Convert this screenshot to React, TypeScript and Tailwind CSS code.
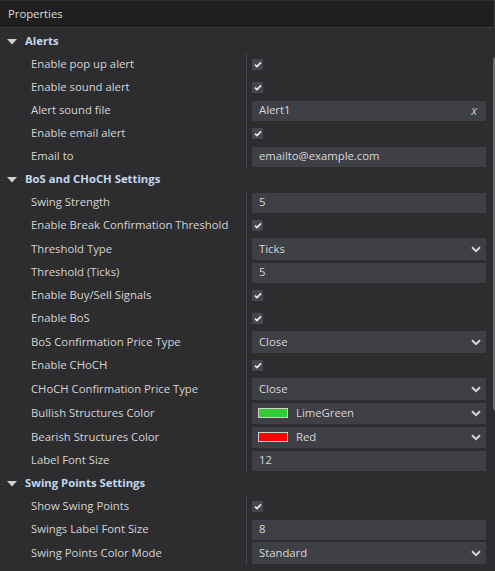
import React from "react";

type Row =
  | { label: string; kind: "check" }
  | { label: string; kind: "text"; value: string; clear?: boolean }
  | { label: string; kind: "select"; value: string }
  | { label: string; kind: "color"; value: string; color: string };

const sections: { title: string; rows: Row[] }[] = [
  {
    title: "Alerts",
    rows: [
      { label: "Enable pop up alert", kind: "check" },
      { label: "Enable sound alert", kind: "check" },
      { label: "Alert sound file", kind: "text", value: "Alert1", clear: true },
      { label: "Enable email alert", kind: "check" },
      { label: "Email to", kind: "text", value: "emailto@example.com" },
    ],
  },
  {
    title: "BoS and CHoCH Settings",
    rows: [
      { label: "Swing Strength", kind: "text", value: "5" },
      { label: "Enable Break Confirmation Threshold", kind: "check" },
      { label: "Threshold Type", kind: "select", value: "Ticks" },
      { label: "Threshold (Ticks)", kind: "text", value: "5" },
      { label: "Enable Buy/Sell Signals", kind: "check" },
      { label: "Enable BoS", kind: "check" },
      { label: "BoS Confirmation Price Type", kind: "select", value: "Close" },
      { label: "Enable CHoCH", kind: "check" },
      { label: "CHoCH Confirmation Price Type", kind: "select", value: "Close" },
      { label: "Bullish Structures Color", kind: "color", value: "LimeGreen", color: "#32cd32" },
      { label: "Bearish Structures Color", kind: "color", value: "Red", color: "#ff0000" },
      { label: "Label Font Size", kind: "text", value: "12" },
    ],
  },
  {
    title: "Swing Points Settings",
    rows: [
      { label: "Show Swing Points", kind: "check" },
      { label: "Swings Label Font Size", kind: "text", value: "8" },
      { label: "Swing Points Color Mode", kind: "select", value: "Standard" },
    ],
  },
];

function Chevron() {
  return (
    <svg width="10" height="7" viewBox="0 0 10 7" className="shrink-0">
      <polyline points="1,1.2 5,5.2 9,1.2" fill="none" stroke="#d6d6d6" strokeWidth="2" />
    </svg>
  );
}

function Value({ row }: { row: Row }) {
  if (row.kind === "check") {
    return (
      <div className="w-[11px] h-[11px] bg-[#46464c] flex items-center justify-center">
        <svg width="8" height="7" viewBox="0 0 8 7">
          <polyline points="1,3.6 3,5.6 7,1.4" fill="none" stroke="#f0f0f0" strokeWidth="1.6" />
        </svg>
      </div>
    );
  }
  if (row.kind === "text") {
    return (
      <div className="h-[20px] w-full bg-[#3f3f46] flex items-center pl-[7px] pr-[9px]">
        <span className="flex-1 text-[#d8d8d8]">{row.value}</span>
        {row.clear && <span className="italic text-[#c8c8c8] text-[12px]">x</span>}
      </div>
    );
  }
  if (row.kind === "select") {
    return (
      <div className="h-[22px] w-full bg-[#3f3f46] flex items-center pl-[7px] pr-[5px]">
        <span className="flex-1 text-[#d8d8d8]">{row.value}</span>
        <Chevron />
      </div>
    );
  }
  return (
    <div className="h-[21px] w-full bg-[#3f3f46] flex items-center pl-[6px] pr-[5px]">
      <div
        className="w-[30px] h-[10px] border border-[#d0d0d0] mr-[8px] shrink-0"
        style={{ backgroundColor: row.color }}
      />
      <span className="flex-1 text-[#d8d8d8]">{row.value}</span>
      <Chevron />
    </div>
  );
}

export default function App() {
  return (
    <div
      className="relative w-[495px] h-[571px] bg-[#2d2d30] overflow-hidden text-[11.3px] text-[#d4d4d4]"
      style={{ fontFamily: '"Open Sans", "Noto Sans", sans-serif' }}
    >
      <div className="h-[28px] bg-[#1f1f1f] border-t border-[#2e2e2e] border-b border-b-[#3a3a3a] flex items-center pl-[8px] text-[#dcdcdc]">
        Properties
      </div>
      <div className="pt-[2px]">
        {sections.map((s) => (
          <div key={s.title}>
            <div className="h-[23px] flex items-center">
              <svg width="10" height="6" viewBox="0 0 10 6" className="ml-[7px] mr-[8px]">
                <polygon points="0,0 10,0 5,5.5" fill="#cfcfcf" />
              </svg>
              <span className="font-bold text-[#c4d8f0]">{s.title}</span>
            </div>
            {s.rows.map((r) => (
              <div
                key={r.label}
                className={`flex ${r.kind === "select" || r.kind === "color" ? "h-[24px]" : "h-[23px]"}`}
              >
                <div className="w-[247px] shrink-0 border-r border-[#45454a] flex items-center pl-[31px] whitespace-nowrap">
                  {r.label}
                </div>
                <div className="flex-1 flex items-center pl-[5px] pr-[9px]">
                  <Value row={r} />
                </div>
              </div>
            ))}
          </div>
        ))}
      </div>
      <div className="absolute right-0 top-0 w-px h-[28px] bg-[#3c3c3c]" />
      <div className="absolute right-0 top-[58px] w-[2px] h-[352px] bg-[#6a6a6a]" />
    </div>
  );
}
